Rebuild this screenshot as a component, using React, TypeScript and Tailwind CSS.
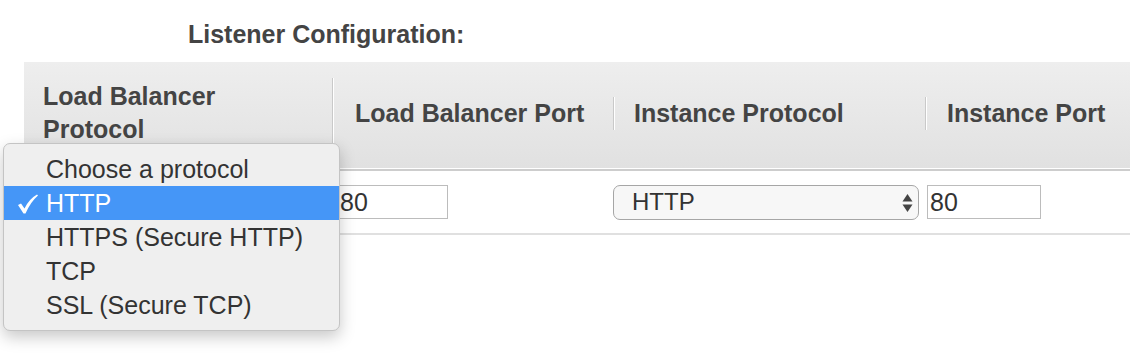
import React from 'react';

const protocols = ['Choose a protocol', 'HTTP', 'HTTPS (Secure HTTP)', 'TCP', 'SSL (Secure TCP)'];

const HeaderCell = ({ width, pad, children }: { width: string; pad: string; children: React.ReactNode }) => (
  <div className={`flex items-center ${width}`}>
    <div className={`w-full ${pad} border-r border-[#c9c9c9] shadow-[1px_0_0_0_#ffffff]`}>{children}</div>
  </div>
);

const App = () => {
  return (
    <div className="relative w-[1130px] h-[354px] overflow-hidden bg-white font-['Liberation_Sans',Arial,sans-serif]">
      <div className="h-[62px] pl-[188px] pt-[20px] text-[25px] leading-[28px] font-bold text-[#444]">
        Listener Configuration:
      </div>

      <div className="ml-[24px]">
        {/* table header */}
        <div className="flex h-[106px] pb-[4px] bg-linear-to-b from-[#eeeeee] to-[#e1e1e1] text-[25px] leading-[33px] font-bold text-[#444]">
          <div className="flex items-center w-[309px]">
            <div className="w-full pl-[19px] py-[2px] border-r border-[#c9c9c9] shadow-[1px_0_0_0_#ffffff]">
              Load Balancer
              <br />
              Protocol
            </div>
          </div>
          <HeaderCell width="w-[281px]" pad="pl-[22px]">Load Balancer Port</HeaderCell>
          <HeaderCell width="w-[312px]" pad="pl-[20px]">Instance Protocol</HeaderCell>
          <div className="flex items-center flex-1">
            <div className="pl-[21px] whitespace-nowrap">Instance Port</div>
          </div>
        </div>
        <div className="h-px bg-white" />
        <div className="h-[2px] bg-[#cdcdcd]" />

        {/* listener row */}
        <div className="flex items-center h-[62px] text-[#333]">
          <div className="w-[314px]" />
          <div className="w-[110px] h-[34px] border border-[#bcbcbc] pl-[1px] text-[25px] leading-[32px]">80</div>
          <div className="w-[165px]" />
          <div className="relative flex items-center w-[306px] h-[35px] rounded-[7px] border border-[#a6a6a6] bg-[#f7f7f7] pl-[18px] text-[24px]">
            HTTP
            <svg className="absolute right-[5px] top-[7px]" width="11" height="20" viewBox="0 0 11 20">
              <path d="M5.5 1 L10.5 8.5 L0.5 8.5 Z" fill="#444" />
              <path d="M0.5 11.5 L10.5 11.5 L5.5 19 Z" fill="#444" />
            </svg>
          </div>
          <div className="ml-[8px] w-[114px] h-[34px] border border-[#bcbcbc] pl-[2px] text-[25px] leading-[32px]">80</div>
        </div>
        <div className="h-[2px] bg-[#e0e0e0]" />
      </div>

      {/* open protocol menu */}
      <div className="absolute left-[3px] top-[143px] w-[337px] rounded-[7px] border border-[#c4c4c4] bg-[#efefef] pt-[8px] pb-[8px] shadow-[0_6px_16px_rgba(0,0,0,0.22)] text-[25px] text-[#333]">
        {protocols.map((p, i) => (
          <div
            key={p}
            className={`relative h-[34px] leading-[34px] pl-[42px] whitespace-nowrap ${i === 1 ? 'bg-[#4596f7] text-white' : ''}`}
          >
            {i === 1 && (
              <svg className="absolute left-[13px] top-[8px]" width="22" height="20" viewBox="0 0 22 20">
                <path d="M1 11 L4 9.5 L7.5 14.5 Q12 5 20 0.5 L21 1.5 Q13.5 8 8.5 19.5 L6.5 19.5 Z" fill="#ffffff" />
              </svg>
            )}
            {p}
          </div>
        ))}
      </div>
    </div>
  );
};

export default App;
